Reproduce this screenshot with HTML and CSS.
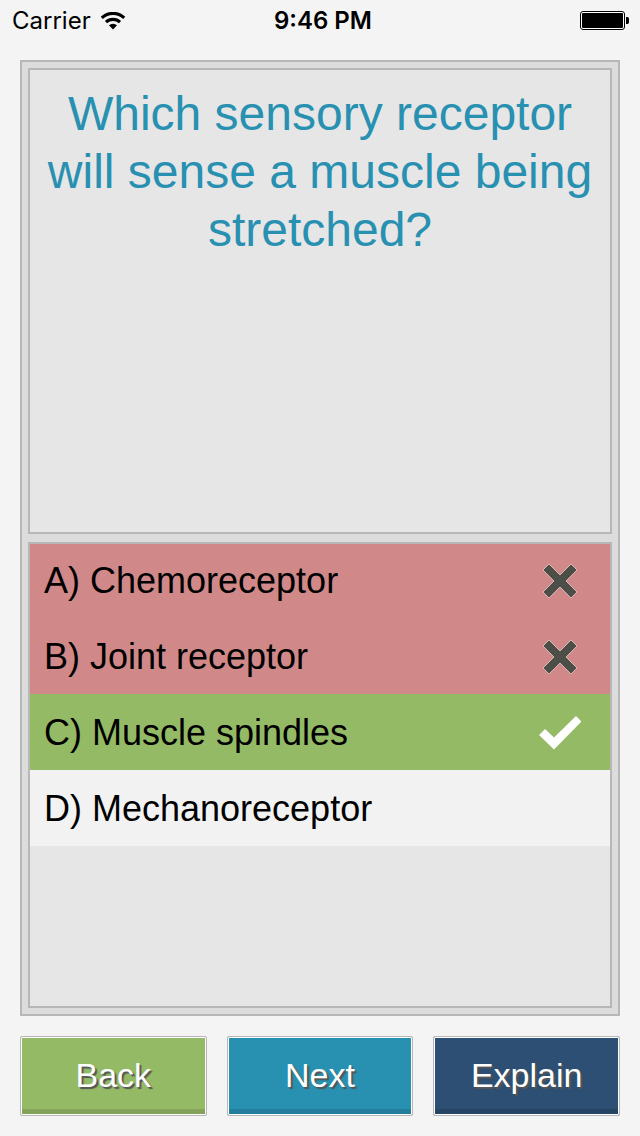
FILE: index.html
```html
<!DOCTYPE html>
<html lang="en">
<head>
<meta charset="utf-8">
<meta name="viewport" content="width=device-width, initial-scale=1">
<title>Quiz</title>
<link rel="stylesheet" href="styles.css">
</head>
<body>
<div class="screen">
  <header class="status">
    <div class="carrier">
      <span>Carrier</span>
      <svg class="wifi" viewBox="0 0 26 18" aria-hidden="true">
        <path d="M1.800 5.800a16.400 16.400 0 0 1 22.400 0M6 10.200a10.200 10.200 0 0 1 14 0" fill="none" stroke="#000" stroke-width="3.100"/>
        <path d="M13 17.500l-4-4.200a5.800 5.800 0 0 1 8 0z"/>
      </svg>
    </div>
    <time class="clock">9:46 PM</time>
    <svg class="battery" viewBox="0 0 50 20" aria-hidden="true">
      <rect x=".5" y=".5" width="44" height="18" rx="2.500" fill="#fff" stroke="#000"/>
      <rect x="2" y="2" width="41" height="15" rx="1"/>
      <path d="M46 6h1.500q1.500 0 1.500 2v3q0 2-1.500 2H46z"/>
    </svg>
  </header>
  <main class="frame">
    <section class="panel">
      <h1 class="question">Which sensory receptor will sense a muscle being stretched?</h1>
    </section>
    <section class="panel">
      <ul class="answers">
        <li><button type="button" class="answer wrong">A) Chemoreceptor
          <svg class="mark" viewBox="0 0 42 42" aria-hidden="true"><path d="M10 4L21 15 32 4 38 10 27 21 38 32 32 38 21 27 10 38 4 32 15 21 4 10z" fill="#4e4e49" stroke="#e3cfca" stroke-width=".8"/></svg></button></li>
        <li><button type="button" class="answer wrong">B) Joint receptor
          <svg class="mark" viewBox="0 0 42 42" aria-hidden="true"><path d="M10 4L21 15 32 4 38 10 27 21 38 32 32 38 21 27 10 38 4 32 15 21 4 10z" fill="#4e4e49" stroke="#e3cfca" stroke-width=".8"/></svg></button></li>
        <li><button type="button" class="answer right">C) Muscle spindles
          <svg class="mark" viewBox="0 0 42 42" aria-hidden="true"><path d="M0 23L6 17 15 25.500 37 4 42.500 9.500 15 37.500z" fill="#fff"/></svg></button></li>
        <li><button type="button" class="answer">D) Mechanoreceptor</button></li>
      </ul>
    </section>
  </main>
  <nav class="actions">
    <button type="button" class="action back">Back</button>
    <button type="button" class="action next">Next</button>
    <button type="button" class="action explain">Explain</button>
  </nav>
</div>
</body>
</html>
```
FILE: styles.css
```css
* { box-sizing: border-box; }

body {
  margin: 0;
  background: #f4f4f4;
  color: #000;
  font-family: "Liberation Sans", Arial, sans-serif;
}

.screen {
  min-height: 100vh;
  padding: 0 20px 20px;
  display: flex;
  flex-direction: column;
}

.status {
  height: 42px;
  margin: 0 -10px 18px -8px;
  display: grid;
  grid-template-columns: 1fr auto 1fr;
  align-items: center;
  column-gap: 4px;
  font: 24px/42px Inter, sans-serif;
}

.carrier {
  display: flex;
  align-items: center;
  gap: 9px;
}

.wifi { width: 26px; height: 18px; }
.clock { font-weight: 600; padding-left: 4px; }
.battery { width: 50px; height: 20px; justify-self: end; }

.frame {
  flex: 1;
  display: grid;
  grid-template-rows: 1fr 1fr;
  gap: 8px;
  padding: 6px;
  border: 2px solid #b7b7b7;
  background: #dcdcdc;
}

.panel {
  border: 2px solid #b7b7b7;
  background: #e6e6e6;
}

.question {
  margin: 0;
  padding: 15px 16px;
  color: #2890b1;
  font-size: 48px;
  font-weight: 400;
  line-height: 58px;
  text-align: center;
}

.answers {
  margin: 0;
  padding: 0;
  list-style: none;
}

.answer {
  display: flex;
  align-items: center;
  justify-content: space-between;
  width: 100%;
  height: 76px;
  padding: 1px 29px 0 14px;
  border: 0;
  background: #f2f2f2;
  color: #000;
  font: inherit;
  font-size: 36px;
  text-align: left;
}

.answers li:first-child .answer {
  height: 74px;
  padding-bottom: 1px;
}

.wrong { background: #d08988; }
.right { background: #94ba65; }
.mark { width: 42px; height: 42px; }

.actions {
  display: grid;
  grid-template-columns: repeat(3, 1fr);
  gap: 20px;
  margin-top: 20px;
}

.action {
  height: 80px;
  padding: 0 0 2px;
  border: 1px solid #b7b7b7;
  border-radius: 2px;
  color: #fff;
  font: inherit;
  font-size: 34px;
  text-shadow: 2px 2px 1px #555;
}

.back { background: #94ba65; box-shadow: inset 0 0 0 1px #fff, inset 0 -6px #82a359; }
.next { background: #2890b1; box-shadow: inset 0 0 0 1px #fff, inset 0 -6px #237e9b; }
.explain { background: #2c4f73; box-shadow: inset 0 0 0 1px #fff, inset 0 -6px #264563; }
```
